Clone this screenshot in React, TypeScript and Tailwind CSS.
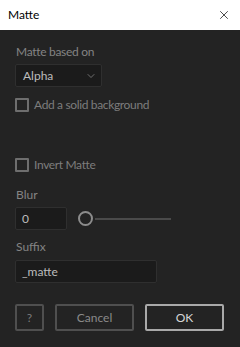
import { X, ChevronDown } from "lucide-react";

function Checkbox({ label }: { label: string }) {
  return (
    <div className="flex h-[14px] items-center">
      <span className="box-border h-[14px] w-[14px] rounded-[1px] border-2 border-[#6e6e6e]" />
      <span className="ml-[5px] text-[12px] leading-4 tracking-[-0.35px] text-[#7d7d7d]">{label}</span>
    </div>
  );
}

export default function App() {
  return (
    <div
      className="h-[347px] w-[240px] bg-[#232323]"
      style={{ fontFamily: 'Lato, "Noto Sans", sans-serif' }}
    >
      <div className="flex h-[30px] items-center justify-between bg-white pl-[8px] pr-[9px]">
        <span className="text-[12px] text-black">Matte</span>
        <X size={14} strokeWidth={1.2} className="text-black" />
      </div>

      <div className="flex flex-col pl-[15px] pt-[14px]">
        <div className="pl-px text-[12px] leading-4 tracking-[-0.3px] text-[#848484]">Matte based on</div>
        <div className="mt-[4px] flex h-[23px] w-[87px] items-center justify-between rounded-[2px] border border-[#2f2f2f] bg-[#1b1b1b] pl-[7px] pr-[4px]">
          <span className="text-[12px] text-[#bdbdbd]">Alpha</span>
          <ChevronDown size={12} strokeWidth={1.5} className="text-[#8a8a8a]" />
        </div>

        <div className="mt-[11px]">
          <Checkbox label="Add a solid background" />
        </div>
        <div className="mt-[46px]">
          <Checkbox label="Invert Matte" />
        </div>

        <div className="mt-[15px] pl-px text-[12px] leading-4 text-[#848484]">Blur</div>
        <div className="mt-[4px] flex items-center">
          <div className="flex h-[23px] w-[52px] items-center rounded-[2px] border border-[#2f2f2f] bg-[#1b1b1b] pl-[6px]">
            <span className="text-[12px] text-[#bdbdbd]">0</span>
          </div>
          <div className="ml-[11px] flex items-center">
            <span className="box-border h-[15px] w-[15px] rounded-full border-2 border-[#8c8c8c]" />
            <span className="ml-[2px] h-[2px] w-[76px] bg-[#4a4a4a]" />
          </div>
        </div>

        <div className="mt-[9px] pl-px text-[12px] leading-4 text-[#848484]">Suffix</div>
        <div className="mt-[5px] flex h-[23px] w-[142px] items-center rounded-[2px] border border-[#2f2f2f] bg-[#1b1b1b] pl-[6px]">
          <span className="text-[12px] text-[#bdbdbd]">_matte</span>
        </div>

        <div className="mt-[21px] flex gap-[11px]">
          <button className="flex h-[27px] w-[29px] items-center justify-center rounded-[2px] border-2 border-[#4f4f4f] text-[12px] text-[#7a7a7a]">
            ?
          </button>
          <button className="flex h-[27px] w-[79px] items-center justify-center rounded-[2px] border-2 border-[#4f4f4f] text-[12px] text-[#8a8a8a]">
            Cancel
          </button>
          <button className="flex h-[27px] w-[79px] items-center justify-center rounded-[2px] border-2 border-[#a9a9a9] text-[12px] text-[#d6d6d6]">
            OK
          </button>
        </div>
      </div>
    </div>
  );
}
